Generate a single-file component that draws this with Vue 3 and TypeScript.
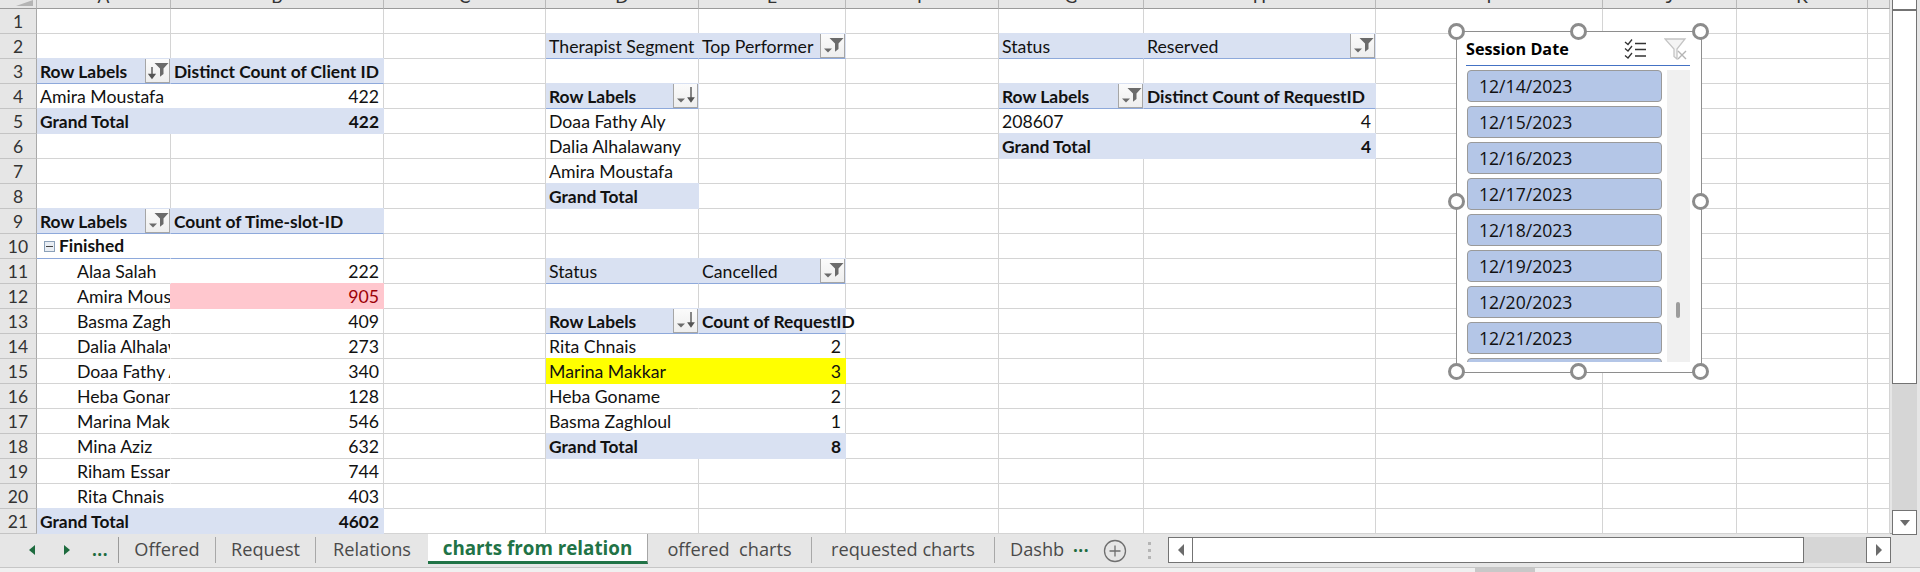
<script setup lang="ts">
interface Cell {
  t?: string;
  kind?: 'head' | 'page' | 'total' | 'plain';
  right?: boolean;   // numbers
  open?: boolean;    // no gridline on the right side
  under?: boolean;   // blue pivot rule below
  spill?: boolean;   // text runs into next cell
  indent?: boolean;
  toggle?: boolean;
  btn?: 'sortfilter' | 'filter' | 'sort';
  mark?: 'pink' | 'yellow';
}

const colLetters = ['A', 'B', 'C', 'D', 'E', 'F', 'G', 'H', 'I', 'J', 'K', ''];
const rows = Array.from({ length: 21 }, (_, i) => i + 1);

const cells: Record<string, Cell> = {
  // first pivot
  A3: { t: 'Row Labels', kind: 'head', btn: 'sortfilter' },
  B3: { t: 'Distinct Count of Client ID', kind: 'head' },
  A4: { t: 'Amira Moustafa', open: true, under: true },
  B4: { t: '422', right: true, under: true },
  A5: { t: 'Grand Total', kind: 'total' },
  B5: { t: '422', kind: 'total', right: true },
  // time slots
  A9: { t: 'Row Labels', kind: 'head', btn: 'filter' },
  B9: { t: 'Count of Time-slot-ID', kind: 'head' },
  A10: { t: 'Finished', toggle: true, open: true, under: true },
  B10: { under: true },
  A21: { t: 'Grand Total', kind: 'total' },
  B21: { t: '4602', kind: 'total', right: true },
  // therapist segment
  D2: { t: 'Therapist Segment', kind: 'page' },
  E2: { t: 'Top Performer', kind: 'page', btn: 'filter' },
  D4: { t: 'Row Labels', kind: 'head', btn: 'sort' },
  D5: { t: 'Doaa Fathy Aly' },
  D6: { t: 'Dalia Alhalawany' },
  D7: { t: 'Amira Moustafa', under: true },
  D8: { t: 'Grand Total', kind: 'total' },
  // cancelled
  D11: { t: 'Status', kind: 'page' },
  E11: { t: 'Cancelled', kind: 'page', btn: 'filter' },
  D13: { t: 'Row Labels', kind: 'head', btn: 'sort' },
  E13: { t: 'Count of RequestID', kind: 'head', spill: true },
  D14: { t: 'Rita Chnais', open: true },
  E14: { t: '2', right: true },
  D15: { t: 'Marina Makkar', mark: 'yellow' },
  E15: { t: '3', right: true, mark: 'yellow' },
  D16: { t: 'Heba Goname', open: true },
  E16: { t: '2', right: true },
  D17: { t: 'Basma Zaghloul', open: true, under: true },
  E17: { t: '1', right: true, under: true },
  D18: { t: 'Grand Total', kind: 'total' },
  E18: { t: '8', kind: 'total', right: true },
  // reserved
  G2: { t: 'Status', kind: 'page' },
  H2: { t: 'Reserved', kind: 'page', btn: 'filter' },
  G4: { t: 'Row Labels', kind: 'head', btn: 'filter' },
  H4: { t: 'Distinct Count of RequestID', kind: 'head' },
  G5: { t: '208607', open: true, under: true },
  H5: { t: '4', right: true, under: true },
  G6: { t: 'Grand Total', kind: 'total' },
  H6: { t: '4', kind: 'total', right: true },
};

const therapists: [string, string][] = [
  ['Alaa Salah', '222'],
  ['Amira Moustafa', '905'],
  ['Basma Zaghloul', '409'],
  ['Dalia Alhalawany', '273'],
  ['Doaa Fathy Aly', '340'],
  ['Heba Goname', '128'],
  ['Marina Makkar', '546'],
  ['Mina Aziz', '632'],
  ['Riham Essar', '744'],
  ['Rita Chnais', '403'],
];
therapists.forEach(([name, count], i) => {
  const r = 11 + i;
  const last = i === therapists.length - 1;
  cells['A' + r] = { t: name, indent: true, open: true, under: last };
  cells['B' + r] = { t: count, right: true, under: last, mark: name === 'Amira Moustafa' ? 'pink' : undefined };
});

const cellAt = (col: string, row: number): Cell => cells[col + row] ?? {};

const dates = ['12/14/2023', '12/15/2023', '12/16/2023', '12/17/2023', '12/18/2023', '12/19/2023', '12/20/2023', '12/21/2023', ''];

const handles = [
  { x: '0', y: '0' }, { x: '50%', y: '0' }, { x: '100%', y: '0' },
  { x: '0', y: '50%' }, { x: '100%', y: '50%' },
  { x: '0', y: '100%' }, { x: '50%', y: '100%' }, { x: '100%', y: '100%' },
];

const tabs = ['Offered', 'Request', 'Relations', 'charts from relation', 'offered  charts', 'requested charts', 'Dashboard'];
const activeTab = 'charts from relation';
</script>

<template>
  <div class="excel">
    <div class="sheet">
      <div class="grid">
        <div class="corner"><i></i></div>
        <div v-for="(c, i) in colLetters" :key="'h' + i" class="col-head"><span>{{ c }}</span></div>

        <template v-for="r in rows" :key="r">
          <div class="row-head">{{ r }}</div>
          <div
            v-for="(c, i) in colLetters"
            :key="r + '-' + i"
            class="cell"
            :class="[
              cellAt(c, r).kind,
              cellAt(c, r).mark,
              {
                right: cellAt(c, r).right,
                open: cellAt(c, r).open,
                under: cellAt(c, r).under,
                spill: cellAt(c, r).spill,
                indent: cellAt(c, r).indent,
                finished: cellAt(c, r).toggle,
              },
            ]"
          >
            <span v-if="cellAt(c, r).toggle" class="toggle"></span>
            <span class="txt">{{ cellAt(c, r).t }}</span>
            <span v-if="cellAt(c, r).btn" class="pivot-btn">
              <svg width="24" height="24" viewBox="0 0 24 24">
                <path v-if="cellAt(c, r).btn !== 'sort'" d="M8.500 4h14l-5 5.500V15l-3.500 2.800V9.500z" fill="#6b6b6b" />
                <path v-if="cellAt(c, r).btn === 'sortfilter'" d="M6 8v10M3.300 15.500l2.700 3.500 2.700-3.500z" stroke="#555" stroke-width="1.400" fill="#555" />
                <path v-if="cellAt(c, r).btn !== 'sortfilter'" d="M3 14.500h8l-4 4z" fill="#6b6b6b" />
                <path v-if="cellAt(c, r).btn === 'sort'" d="M17 3v14M14.500 14l2.500 3.500 2.500-3.500z" stroke="#555" stroke-width="1.400" fill="#555" />
              </svg>
            </span>
          </div>
        </template>
      </div>

      <div class="slicer">
        <span v-for="(h, i) in handles" :key="i" class="handle" :style="{ left: h.x, top: h.y }"></span>
        <div class="slicer-head">
          <span class="slicer-title">Session Date</span>
          <svg class="ms-icon" width="24" height="22" viewBox="0 0 24 22" fill="none" stroke="#333" stroke-width="1.300">
            <path d="M2 4l3 2.500 4-5M2 10.500l3 2.500 4-5M2 17.500l3 2.500 4-5" />
            <path d="M12 5.500h11M12 11.500h11M12 18h11" stroke-width="1.600" />
          </svg>
          <svg class="clear-icon" width="23" height="22" viewBox="0 0 23 22" fill="none">
            <path d="M1 1h20l-8 10v10l-3-2.500V11z" stroke="#c4c4c4" stroke-width="1.300" fill="#f4f4f4" />
            <path d="M14 13l8 8M22 13l-8 8" stroke="#b4b4b4" stroke-width="1.400" />
          </svg>
        </div>
        <div class="slicer-body">
          <div class="slicer-list">
            <div v-for="(d, i) in dates" :key="i" class="slicer-item">{{ d }}</div>
          </div>
          <div class="slicer-scroll"><i></i></div>
        </div>
      </div>
    </div>

    <div class="vscroll">
      <div class="v-top"></div>
      <div class="v-thumb"></div>
      <div class="v-track"></div>
      <div class="v-btn"><i></i></div>
    </div>

    <div class="tabbar">
      <div class="nav">
        <i class="tri-l"></i>
        <i class="tri-r"></i>
        <b class="dots">...</b>
      </div>
      <div
        v-for="t in tabs"
        :key="t"
        class="tab"
        :class="{ active: t === activeTab }"
      >
        <span>{{ t }}</span>
      </div>
      <b class="dots more">...</b>
      <svg class="add" width="24" height="24" viewBox="0 0 24 24" fill="none" stroke="#6f6f6f">
        <circle cx="12" cy="12" r="10.500" stroke-width="1.300" />
        <path d="M12 6.500v11M6.500 12h11" stroke-width="1.300" />
      </svg>
      <div class="grip"><i></i><i></i><i></i></div>
      <div class="hscroll">
        <div class="h-btn"><i class="h-l"></i></div>
        <div class="h-thumb"></div>
        <div class="h-track"></div>
        <div class="h-btn"><i class="h-r"></i></div>
      </div>
    </div>

    <div class="status"><i></i></div>
  </div>
</template>

<style>
html, body {
  margin: 0;
  background: #e6e6e6;
  overflow: hidden;
}
</style>

<style scoped>
.excel {
  width: 1920px;
  height: 572px;
  display: grid;
  grid-template-columns: 1892px 28px;
  grid-template-rows: 533px 35px 4px;
  background: #e6e6e6;
  font-family: Lato, "Open Sans", sans-serif;
  overflow: hidden;
}

.sheet {
  position: relative;
  height: 533px;
  background: #e6e6e6;
}

.grid {
  display: grid;
  grid-template-columns: 37px 134px 213px 162px 153px 147px 153px 145px 232px 227px 134px 131px 22px;
  grid-template-rows: 9px repeat(21, 25px);
  width: 1890px;
  background: #fff;
  border-right: 1px solid #a8a8a8;
  box-sizing: border-box;
  font-size: 17.7px;
  color: #111;
}

.corner {
  background: #e6e6e6;
  border-right: 1px solid #b5b5b5;
  border-bottom: 1px solid #9a9a9a;
  overflow: hidden;
  position: relative;
}
.corner i {
  position: absolute;
  right: 3px;
  top: 0;
  width: 0;
  height: 0;
  border-left: 17px solid transparent;
  border-bottom: 6px solid #b4b4b4;
}

.col-head {
  background: #e6e6e6;
  border-right: 1px solid #b9b9b9;
  border-bottom: 1px solid #9a9a9a;
  overflow: hidden;
  display: flex;
  align-items: flex-end;
  justify-content: center;
  font-size: 17.5px;
  line-height: 20px;
  color: #333;
}
.col-head span {
  margin-bottom: 1px;
}

.row-head {
  background: #e6e6e6;
  border-right: 1px solid #a9a9a9;
  border-bottom: 1px solid #c4c4c4;
  text-align: center;
  line-height: 26px;
  font-size: 17.5px;
  color: #333;
}

.cell {
  position: relative;
  box-sizing: border-box;
  border-right: 1px solid #d4d4d4;
  border-bottom: 1px solid #d4d4d4;
  padding: 0 4px 0 3px;
  line-height: 26px;
  white-space: pre;
  overflow: hidden;
  min-width: 0;
}
.cell.right {
  text-align: right;
  padding-right: 4px;
}
.cell.open {
  border-right-color: #fff;
}
.cell.under {
  border-bottom-color: #8ea9db;
}
.cell.indent {
  padding-left: 40px;
}
.cell.spill {
  overflow: visible;
  z-index: 1;
}

.head, .page, .total {
  background: #d9e1f2;
  border-right-color: #d9e1f2;
  box-shadow: 0 -1px 0 #d9e1f2;
}
.head, .page {
  border-bottom-color: #8ea9db;
}
.total {
  border-bottom-color: #d9e1f2;
}
.head, .total, .finished {
  font-weight: 700;
  font-size: 17.4px;
}
.pink {
  background: #ffc7ce;
  border-right-color: #ffc7ce;
  border-bottom-color: #ffc7ce;
  box-shadow: 0 -1px 0 #ffc7ce, -1px 0 0 #ffc7ce;
  color: #9c0006;
}
.yellow {
  background: #ff0;
  border-right-color: #ff0;
  border-bottom-color: #ff0;
  box-shadow: 0 -1px 0 #ff0;
}

.finished {
  display: flex;
  align-items: center;
  padding-left: 7px;
}
.toggle {
  position: relative;
  width: 9px;
  height: 9px;
  margin-right: 4px;
  border: 1px solid #8aa0b8;
  background: #e9eef4;
  flex: none;
}
.toggle::after {
  content: "";
  position: absolute;
  left: 1px;
  right: 1px;
  top: 4px;
  height: 1px;
  background: #444;
}

.pivot-btn {
  position: absolute;
  right: 0;
  top: -1px;
  width: 23px;
  height: 23px;
  border: 1px solid #a6a6a6;
  background: linear-gradient(#fbfbfb, #eeeeee);
  box-sizing: content-box;
}
.pivot-btn svg {
  display: block;
}

/* slicer floats over the sheet */
.slicer {
  position: absolute;
  left: 1456px;
  top: 31px;
  width: 246px;
  height: 342px;
  box-sizing: border-box;
  border: 1px solid #8e8e8e;
  background: #fff;
  padding: 0 11px 0 10px;
  font-family: "Open Sans", sans-serif;
  color: #111;
  z-index: 2;
}
.handle {
  position: absolute;
  width: 11px;
  height: 11px;
  margin: -9px 0 0 -9px;
  border: 3px solid #8c8c8c;
  border-radius: 50%;
  background: #fff;
}
.slicer-head {
  height: 34px;
  display: flex;
  align-items: center;
  border-bottom: 1px solid #4472c4;
  box-sizing: border-box;
  padding-top: 1px;
  margin-left: -1px;
}
.slicer-title {
  font-size: 16.2px;
  font-weight: 700;
  color: #000;
  margin-right: auto;
}
.ms-icon {
  margin-right: 17px;
}
.clear-icon {
  margin-right: 3px;
}
.slicer-body {
  display: flex;
  justify-content: space-between;
  height: 292px;
  margin-top: 4px;
}
.slicer-list {
  width: 195px;
  display: flex;
  flex-direction: column;
  gap: 4px;
  overflow: hidden;
}
.slicer-item {
  flex: none;
  height: 32px;
  box-sizing: border-box;
  border: 1px solid #9a9a9a;
  border-radius: 4px;
  background: #b4c6e7;
  padding-left: 11px;
  font-size: 17.6px;
  line-height: 30px;
}
.slicer-scroll {
  position: relative;
  width: 23px;
  background: #f0f0f0;
}
.slicer-scroll i {
  position: absolute;
  left: 9px;
  top: 232px;
  width: 4px;
  height: 16px;
  border-radius: 2px;
  background: #9c9c9c;
}

/* vertical scrollbar */
.vscroll {
  grid-column: 2;
  grid-row: 1 / 3;
  display: flex;
  flex-direction: column;
  padding-bottom: 32px;
  box-sizing: border-box;
  background: #e6e6e6;
  height: 567px;
}
.vscroll > div {
  width: 25px;
  box-sizing: border-box;
}
.v-top {
  height: 10px;
  background: #fff;
  border: 1px solid #737373;
  border-top: 0;
}
.v-thumb {
  height: 374px;
  background: #fff;
  border: 1px solid #737373;
}
.v-track {
  flex: 1;
  background: #d6d6d6;
}
.v-btn {
  height: 25px;
  background: #fff;
  border: 1px solid #737373;
  display: flex;
  align-items: center;
  justify-content: center;
}
.v-btn i {
  width: 0;
  height: 0;
  border-left: 5px solid transparent;
  border-right: 5px solid transparent;
  border-top: 6px solid #6b6b6b;
}

/* sheet tabs */
.tabbar {
  grid-column: 1;
  grid-row: 2;
  display: flex;
  align-items: stretch;
  height: 34px;
  box-sizing: border-box;
  border-top: 1px solid #a6a6a6;
  background: #e6e6e6;
  font-family: "Open Sans", sans-serif;
  font-size: 18.2px;
  color: #4a4a4a;
}
.nav {
  position: relative;
  width: 118px;
  flex: none;
  margin: 3px 0 4px;
  border-right: 1px solid #9a9a9a;
  box-sizing: content-box;
}
.nav i {
  position: absolute;
  top: 8px;
  width: 0;
  height: 0;
  border-top: 5px solid transparent;
  border-bottom: 5px solid transparent;
}
.tri-l {
  left: 29px;
  border-right: 6px solid #1d6b3e;
}
.tri-r {
  left: 64px;
  border-left: 6px solid #1d6b3e;
}
.dots {
  color: #1d6b3e;
  font-size: 17px;
  font-weight: 700;
  letter-spacing: 0.5px;
}
.nav .dots {
  position: absolute;
  left: 92px;
  top: 1px;
}
.tab {
  flex: none;
  margin: 3px 0 4px;
  box-sizing: border-box;
  border-right: 1px solid #a8a8a8;
  line-height: 25px;
  text-align: center;
  white-space: pre;
  overflow: hidden;
}
.tab:nth-child(2) { width: 97px; }
.tab:nth-child(3) { width: 100px; }
.tab:nth-child(4) { width: 112px; border-right: 0; }
.tab:nth-child(6) { width: 164px; }
.tab:nth-child(7) { width: 182px; border-right: 0; }
.tab:nth-child(8) {
  width: 79px;
  padding-left: 15px;
  text-align: left;
  border-left: 1px solid #a8a8a8;
  border-right: 0;
}
.tab:nth-child(8) span {
  display: block;
  width: 55px;
  overflow: hidden;
}
.tab.active {
  width: 220px;
  margin: -1px 0 0;
  height: 31px;
  background: #fff;
  border-right: 1px solid #a6a6a6;
  border-bottom: 3px solid #217346;
  color: #217346;
  font-weight: 700;
  font-size: 18.8px;
  line-height: 30px;
}
.more {
  width: 26px;
  flex: none;
  line-height: 24px;
}
.add {
  flex: none;
  margin: 5px 0 0 4px;
}
.grip {
  flex: none;
  width: 41px;
  display: flex;
  flex-direction: column;
  align-items: center;
  gap: 4px;
  padding: 8px 0 0 3px;
  box-sizing: border-box;
}
.grip i {
  width: 3px;
  height: 3px;
  background: #b5b5b5;
}
.hscroll {
  flex: none;
  width: 723px;
  height: 26px;
  margin-top: 3px;
  display: flex;
}
.h-btn {
  width: 25px;
  flex: none;
  box-sizing: border-box;
  background: #fff;
  border: 1px solid #737373;
  display: flex;
  align-items: center;
  justify-content: center;
}
.h-thumb {
  width: 611px;
  flex: none;
  box-sizing: border-box;
  background: #fff;
  border: 1px solid #737373;
  border-left: 0;
}
.h-track {
  flex: 1;
  background: #d6d6d6;
}
.h-l, .h-r {
  width: 0;
  height: 0;
  border-top: 6px solid transparent;
  border-bottom: 6px solid transparent;
}
.h-l {
  border-right: 6px solid #6b6b6b;
}
.h-r {
  border-left: 6px solid #6b6b6b;
}

.status {
  grid-column: 1 / 3;
  grid-row: 3;
  position: relative;
  background: #f0f0f0;
  border-top: 1px solid #c6c6c6;
  margin-top: -1px;
}
.status i {
  position: absolute;
  left: 1475px;
  top: 0;
  bottom: 0;
  width: 60px;
  background: #c8c8c8;
}
</style>
